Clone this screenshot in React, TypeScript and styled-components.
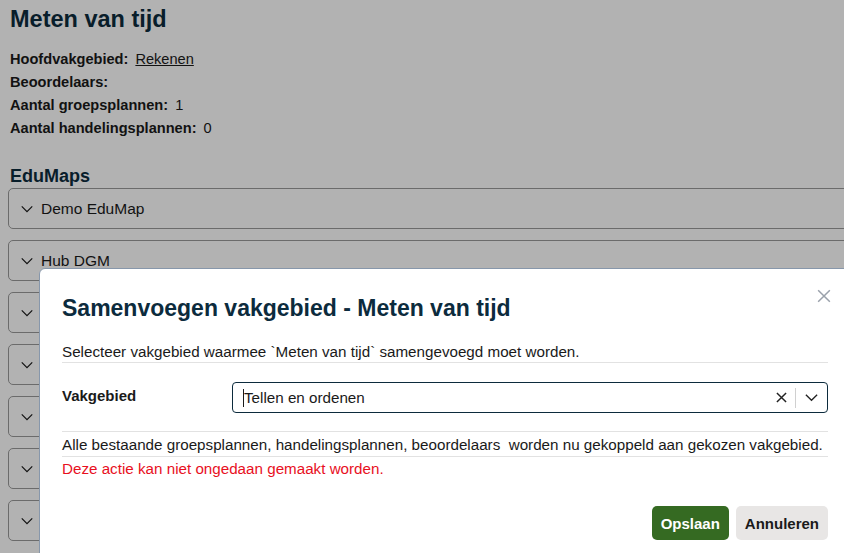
import React from 'react';
import styled, { createGlobalStyle } from 'styled-components';

const GlobalStyle = createGlobalStyle`
  html, body {
    margin: 0;
    padding: 0;
    background: #ffffff;
    font-family: "Liberation Sans", Arial, sans-serif;
    color: #1a1a1a;
    overflow: hidden;
  }
`;

const Page = styled.div`
  padding: 0 8px;
  height: 553px;
  overflow: hidden;
`;

const Title = styled.h1`
  margin: 0;
  padding: 5px 0 0 2px;
  font-size: 23.5px;
  line-height: 28px;
  font-weight: 700;
  color: #0c2b3d;
`;

const InfoList = styled.div`
  padding: 15px 0 0 2px;
  display: flex;
  flex-direction: column;
`;

const InfoRow = styled.div`
  font-size: 14.6px;
  line-height: 23px;
  display: flex;
  gap: 7px;
`;

const InfoLabel = styled.span`
  font-weight: 700;
`;

const InfoLink = styled.a`
  color: #1a1a1a;
  text-decoration: underline;
`;

const SectionTitle = styled.h2`
  margin: 0;
  padding: 25px 0 0 2px;
  font-size: 18px;
  line-height: 22px;
  font-weight: 700;
  color: #0c2b3d;
`;

const Accordion = styled.div`
  display: flex;
  flex-direction: column;
  gap: 11px;
  margin-top: 1px;
  margin-right: -20px;
`;

const AccordionItem = styled.div`
  height: 41px;
  border: 1px solid #9a9a9a;
  border-radius: 5px;
  display: flex;
  align-items: center;
  padding-left: 11px;
  gap: 7px;
  font-size: 15.5px;
  box-sizing: border-box;
`;

const Backdrop = styled.div`
  position: fixed;
  inset: 0;
  background: rgba(0, 0, 0, 0.3);
`;

const Modal = styled.div`
  position: fixed;
  left: 39px;
  top: 268px;
  width: 812px;
  height: 320px;
  background: #ffffff;
  border: 1px solid #8797ab;
  border-radius: 6px;
  box-sizing: border-box;
  padding: 0 22px;
`;

const ModalHeader = styled.div`
  display: flex;
  align-items: center;
  justify-content: space-between;
  height: 73px;
`;

const ModalTitle = styled.h3`
  margin: 0;
  padding-top: 6px;
  font-size: 23px;
  font-weight: 700;
  color: #0c2b3d;
`;

const CloseButton = styled.button`
  border: none;
  background: none;
  padding: 0;
  margin: -20px -3px 0 0;
  color: #9aa1ab;
  display: flex;
  cursor: pointer;
`;

const TextLine = styled.div<{ $danger?: boolean; $ruled?: boolean }>`
  font-size: 15.2px;
  line-height: 20px;
  white-space: nowrap;
  padding: ${({ $ruled }) => ($ruled ? '0 0 0' : '2px 0 0')};
  color: ${({ $danger }) => ($danger ? '#e8101e' : '#1a1a1a')};
  border-bottom: ${({ $ruled }) => ($ruled ? '1px solid #e2e2e2' : 'none')};
`;

const NoticeLine = styled(TextLine)`
  padding: 3px 0 1px;
`;

const FieldRow = styled.div`
  display: grid;
  grid-template-columns: 170px 1fr;
  align-items: center;
  padding: 19px 0 18px;
  border-bottom: 1px solid #e2e2e2;
`;

const FieldLabel = styled.label`
  font-size: 15px;
  font-weight: 700;
  color: #1a1a1a;
  margin-top: -4px;
`;

const Select = styled.div`
  height: 31px;
  border: 1px solid #0c2b3d;
  border-radius: 4px;
  display: flex;
  align-items: center;
  box-sizing: border-box;
  padding-left: 10px;
  font-size: 15.2px;
`;

const SelectValue = styled.span`
  flex: 1;
  border-left: 1px solid #1a1a1a;
  line-height: 18px;
`;

const SelectIcon = styled.span`
  display: flex;
  align-items: center;
  padding: 0 8px;
  color: #222;
`;

const Separator = styled.span`
  width: 1px;
  height: 20px;
  background: #d0d0d0;
`;

const Footer = styled.div`
  display: flex;
  justify-content: flex-end;
  gap: 7px;
  padding-top: 27px;
`;

const Button = styled.button<{ $primary?: boolean }>`
  height: 34px;
  padding: 0 9px;
  border: none;
  border-radius: 5px;
  font-family: inherit;
  font-size: 15px;
  font-weight: 700;
  background: ${({ $primary }) => ($primary ? '#356a22' : '#e8e6e5')};
  color: ${({ $primary }) => ($primary ? '#ffffff' : '#1a1a1a')};
`;

const Chevron = ({ size = 14 }: { size?: number }) => (
  <svg width={size} height={size} viewBox="0 0 16 16" fill="none">
    <path d="M2 5l6 6 6-6" stroke="currentColor" strokeWidth="1.4" />
  </svg>
);

const Cross = ({ size = 12, stroke = 1.5 }: { size?: number; stroke?: number }) => (
  <svg width={size} height={size} viewBox="0 0 12 12" fill="none">
    <path d="M1 1l10 10M11 1L1 11" stroke="currentColor" strokeWidth={stroke} />
  </svg>
);

const eduMaps = ['Demo EduMap', 'Hub DGM', '', '', '', '', ''];

export default function App() {
  return (
    <>
      <GlobalStyle />
      <Page>
        <Title>Meten van tijd</Title>
        <InfoList>
          <InfoRow>
            <InfoLabel>Hoofdvakgebied:</InfoLabel>
            <InfoLink href="#">Rekenen</InfoLink>
          </InfoRow>
          <InfoRow>
            <InfoLabel>Beoordelaars:</InfoLabel>
          </InfoRow>
          <InfoRow>
            <InfoLabel>Aantal groepsplannen:</InfoLabel>
            <span>1</span>
          </InfoRow>
          <InfoRow>
            <InfoLabel>Aantal handelingsplannen:</InfoLabel>
            <span>0</span>
          </InfoRow>
        </InfoList>
        <SectionTitle>EduMaps</SectionTitle>
        <Accordion>
          {eduMaps.map((name, i) => (
            <AccordionItem key={i}>
              <Chevron />
              {name}
            </AccordionItem>
          ))}
        </Accordion>
      </Page>
      <Backdrop />
      <Modal>
        <ModalHeader>
          <ModalTitle>Samenvoegen vakgebied - Meten van tijd</ModalTitle>
          <CloseButton aria-label="Sluiten">
            <Cross size={14} stroke={1.3} />
          </CloseButton>
        </ModalHeader>
        <TextLine $ruled>
          Selecteer vakgebied waarmee `Meten van tijd` samengevoegd moet worden.
        </TextLine>
        <FieldRow>
          <FieldLabel>Vakgebied</FieldLabel>
          <Select>
            <SelectValue>Tellen en ordenen</SelectValue>
            <SelectIcon>
              <Cross size={11} stroke={1.6} />
            </SelectIcon>
            <Separator />
            <SelectIcon>
              <Chevron size={15} />
            </SelectIcon>
          </Select>
        </FieldRow>
        <NoticeLine $ruled>
          Alle bestaande groepsplannen, handelingsplannen, beoordelaars&nbsp; worden nu gekoppeld aan gekozen vakgebied.
        </NoticeLine>
        <TextLine $danger>Deze actie kan niet ongedaan gemaakt worden.</TextLine>
        <Footer>
          <Button $primary>Opslaan</Button>
          <Button>Annuleren</Button>
        </Footer>
      </Modal>
    </>
  );
}
